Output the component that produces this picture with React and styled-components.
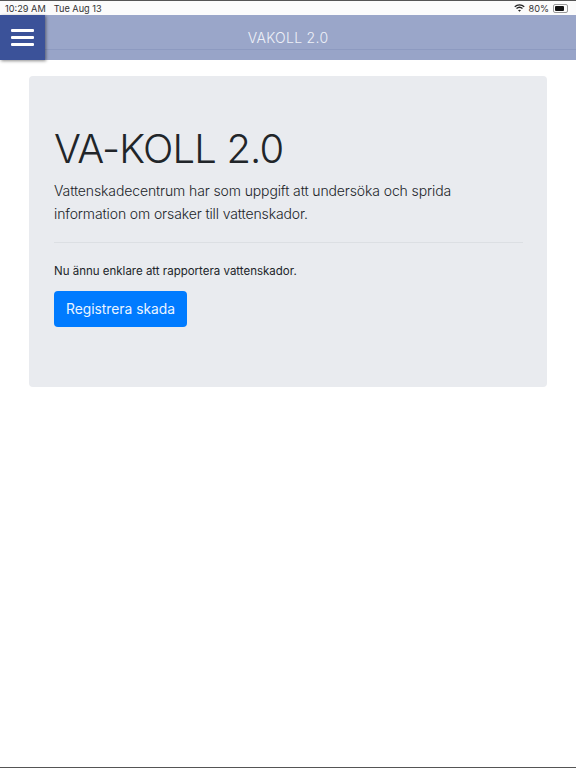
import React from 'react';
import styled, { createGlobalStyle } from 'styled-components';

const GlobalStyle = createGlobalStyle`
    html, body {
        margin: 0;
        padding: 0;
        background: #fff;
    }
    body {
        font-family: Inter, "Liberation Sans", sans-serif;
        color: #212529;
    }
`;

const WifiIcon = () => (
    <svg width='11' height='8' viewBox='0 0 22 16' fill='none' stroke='#222' strokeWidth='2.6'>
        <path d='M1.5 5.5C7 .5 15 .5 20.5 5.5' />
        <path d='M5 9.2c3.6-3.2 8.4-3.2 12 0' />
        <path d='M11 15.5l-3-3.2c1.8-1.4 4.2-1.4 6 0z' fill='#222' stroke='none' />
    </svg>
);

const App = () => {
    return (
        <Page>
            <GlobalStyle />
            <StatusBar>
                <StatusGroup>
                    <span>10:29 AM</span>
                    <span>Tue Aug 13</span>
                </StatusGroup>
                <BatteryGroup>
                    <WifiIcon />
                    <span>80%</span>
                    <Battery>
                        <BatteryLevel style={{ width: '80%' }} />
                    </Battery>
                </BatteryGroup>
            </StatusBar>
            <Navbar>
                <MenuButton aria-label='Meny'>
                    <MenuLine />
                    <MenuLine />
                    <MenuLine />
                </MenuButton>
                <NavTitle>VAKOLL 2.0</NavTitle>
            </Navbar>
            <Jumbotron>
                <Title>VA-KOLL 2.0</Title>
                <Lead>
                    Vattenskadecentrum har som uppgift att undersöka och sprida
                    information om orsaker till vattenskador.
                </Lead>
                <Divider />
                <Text>Nu ännu enklare att rapportera vattenskador.</Text>
                <PrimaryButton>Registrera skada</PrimaryButton>
            </Jumbotron>
            <BottomLine />
        </Page>
    );
};

const Page = styled.div`
    height: 768px;
    display: flex;
    flex-direction: column;
    overflow: hidden;
    border-top: 1px solid #555;
    box-sizing: border-box;
`;

const StatusBar = styled.div`
    height: 14px;
    flex-shrink: 0;
    display: flex;
    align-items: center;
    justify-content: space-between;
    padding: 0 8px 0 5px;
    font-size: 9.2px;
    color: #333;
    background: #fbfbfb;
`;

const StatusGroup = styled.div`
    display: flex;
    gap: 8px;
`;

const BatteryGroup = styled.div`
    display: flex;
    align-items: center;
    gap: 3px;
`;

const Battery = styled.div`
    width: 11px;
    height: 5px;
    padding: 1px;
    border: 1px solid #999;
    border-radius: 2px;
    margin-left: 1px;
`;

const BatteryLevel = styled.div`
    height: 100%;
    background: #111;
    border-radius: 1px;
`;

const Navbar = styled.div`
    height: 45px;
    flex-shrink: 0;
    display: flex;
    align-items: center;
    position: relative;
    background: #9aa6c9;
    box-shadow: inset 0 -10px 0 #98a4c8, inset 0 -11px 0 #8d9ac0;
`;

const MenuButton = styled.button`
    width: 45px;
    height: 45px;
    border: 0;
    padding: 0;
    display: flex;
    flex-direction: column;
    align-items: center;
    justify-content: center;
    gap: 4px;
    background: #3b5299;
    box-shadow: 1px 1px 3px rgba(0, 0, 0, 0.45);
    position: relative;
    z-index: 1;
`;

const MenuLine = styled.span`
    width: 23px;
    height: 3px;
    background: #fff;
    border-radius: 1px;
`;

const NavTitle = styled.div`
    position: absolute;
    left: 0;
    right: 0;
    text-align: center;
    font-size: 14px;
    font-weight: 300;
    letter-spacing: 0.3px;
    color: #eef1f8;
`;

const Jumbotron = styled.div`
    margin: 16px 29px 0;
    height: 311px;
    box-sizing: border-box;
    padding: 48px 24px 0 25px;
    background: #e9ebef;
    border-radius: 4px;
`;

const Title = styled.h1`
    margin: 0 0 6px;
    font-size: 40px;
    line-height: 49px;
    font-weight: 300;
    letter-spacing: -0.85px;
    color: #212529;
`;

const Lead = styled.p`
    margin: 0;
    font-size: 14px;
    line-height: 23px;
    font-weight: 300;
    letter-spacing: -0.12px;
    color: #212529;
`;

const Divider = styled.hr`
    margin: 17px 0 20px;
    border: 0;
    border-top: 1px solid #dcdfe3;
`;

const Text = styled.p`
    margin: 0 0 12px;
    font-size: 11.5px;
    line-height: 16px;
    color: #212529;
`;

const PrimaryButton = styled.button`
    display: block;
    width: 133px;
    height: 36px;
    padding: 0;
    border: 0;
    border-radius: 4px;
    background: #007bff;
    color: #eaf4ff;
    font-family: inherit;
    font-size: 13.8px;
`;

const BottomLine = styled.div`
    margin-top: auto;
    height: 1px;
    background: #555;
`;

export default App;
